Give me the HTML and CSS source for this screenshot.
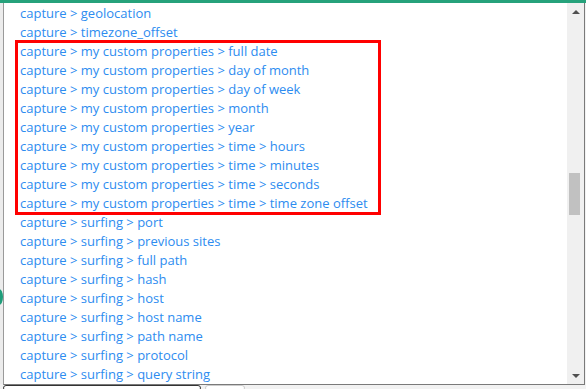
FILE: index.html
```html
<!DOCTYPE html>
<html lang="en">
<head>
    <meta charset="UTF-8">
    <title>Field picker</title>
    <link rel="stylesheet" href="styles.css">
</head>
<body>
    <div class="topbar"></div>
    <div class="page">
        <div class="side"><span class="dot"></span></div>
        <div class="dropdown">
            <ul class="options">
                <li>capture &gt; geolocation</li>
                <li>capture &gt; timezone_offset</li>
                <div class="marked">
                    <li>capture &gt; my custom properties &gt; full date</li>
                    <li>capture &gt; my custom properties &gt; day of month</li>
                    <li>capture &gt; my custom properties &gt; day of week</li>
                    <li>capture &gt; my custom properties &gt; month</li>
                    <li>capture &gt; my custom properties &gt; year</li>
                    <li>capture &gt; my custom properties &gt; time &gt; hours</li>
                    <li>capture &gt; my custom properties &gt; time &gt; minutes</li>
                    <li>capture &gt; my custom properties &gt; time &gt; seconds</li>
                    <li>capture &gt; my custom properties &gt; time &gt; time zone offset</li>
                </div>
                <li>capture &gt; surfing &gt; port</li>
                <li>capture &gt; surfing &gt; previous sites</li>
                <li>capture &gt; surfing &gt; full path</li>
                <li>capture &gt; surfing &gt; hash</li>
                <li>capture &gt; surfing &gt; host</li>
                <li>capture &gt; surfing &gt; host name</li>
                <li>capture &gt; surfing &gt; path name</li>
                <li>capture &gt; surfing &gt; protocol</li>
                <li>capture &gt; surfing &gt; query string</li>
            </ul>
            <div class="scrollbar">
                <span class="arrow up"></span>
                <div class="track"><div class="thumb"></div></div>
                <span class="arrow down"></span>
            </div>
        </div>
    </div>
    <div class="under">
        <div class="field"></div>
        <div class="field small"></div>
    </div>
</body>
</html>
```

FILE: styles.css
```css
* {
    margin: 0;
    padding: 0;
    box-sizing: border-box;
}
body {
    background-color: #f2f2f2;
    font-family: "Open Sans", "Liberation Sans", sans-serif;
    width: 586px;
    height: 389px;
    overflow: hidden;
}
.topbar {
    height: 3px;
    background-color: #26a27b;
}
.page {
    display: flex;
}
.side {
    width: 3px;
    height: 381px;
    position: relative;
    background-color: #ececec;
}
.dot {
    position: absolute;
    left: -5px;
    top: 286px;
    width: 8px;
    height: 16px;
    border-radius: 50%;
    background-color: #1f9d7a;
}
.dropdown {
    width: 582px;
    height: 382px;
    display: flex;
    background-color: #fff;
    border: 1px solid #7a7a7a;
    border-top: none;
    border-left-color: #9a9a9a;
    overflow: hidden;
}
.options {
    flex: 1;
    list-style: none;
    padding-top: 1px;
    overflow: hidden;
}
.options li {
    height: 19px;
    line-height: 19px;
    padding-left: 16px;
    font-size: 13px;
    color: #2d8cf0;
    white-space: nowrap;
}
.marked {
    width: 362px;
    margin-left: 13px;
    outline: 3px solid #f00;
    outline-offset: -1px;
}
.marked li {
    padding-left: 3px;
}
.scrollbar {
    width: 17px;
    display: flex;
    flex-direction: column;
    background-color: #f0f0f0;
}
.arrow {
    height: 17px;
    display: flex;
    justify-content: center;
    align-items: center;
}
.arrow.up::before {
    content: "";
    border-left: 4px solid transparent;
    border-right: 4px solid transparent;
    border-bottom: 4px solid #505050;
}
.arrow.down::before {
    content: "";
    border-left: 4px solid transparent;
    border-right: 4px solid transparent;
    border-top: 4px solid #505050;
}
.track {
    flex: 1;
    padding-top: 153px;
}
.thumb {
    width: 11px;
    height: 42px;
    margin-left: 2px;
    background-color: #c1c1c1;
}
.under {
    display: flex;
    padding-left: 3px;
    gap: 4px;
}
.field {
    width: 198px;
    height: 6px;
    border: 1px solid #333;
    border-radius: 3px;
    background-color: #fff;
}
.field.small {
    width: 40px;
    border-color: #ccc;
}
```
